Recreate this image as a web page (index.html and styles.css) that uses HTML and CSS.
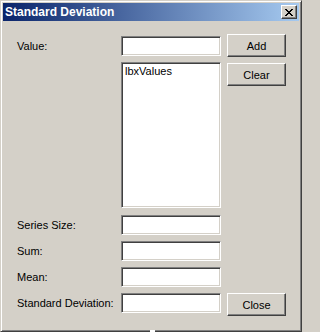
FILE: index.html
```html
<!DOCTYPE html>
<html>
<head>
<meta charset="utf-8">
<title>Standard Deviation</title>
<link rel="stylesheet" href="styles.css">
</head>
<body>
<div class="window">
  <div class="titlebar">
    <span class="title">Standard Deviation</span>
    <button class="tb-close" aria-label="Close">
      <svg width="8" height="7" viewBox="0 0 8 7" shape-rendering="crispEdges">
        <path d="M0 0h2v1h-2zM6 0h2v1h-2zM1 1h2v1h-2zM5 1h2v1h-2zM2 2h4v1h-4zM3 3h2v1h-2zM2 4h4v1h-4zM1 5h2v1h-2zM5 5h2v1h-2zM0 6h2v1h-2zM6 6h2v1h-2z" fill="#000"/>
      </svg>
    </button>
  </div>
  <div class="form">
    <div class="row row-value">
      <span class="lbl lbl-top">Value:</span>
      <div class="field field-top"></div>
      <button class="btn">Add</button>
    </div>
    <div class="row row-list">
      <span class="lbl"></span>
      <div class="listbox">lbxValues</div>
      <button class="btn btn-clear">Clear</button>
    </div>
    <div class="row row-first">
      <span class="lbl">Series Size:</span>
      <div class="field"></div>
    </div>
    <div class="row row-next">
      <span class="lbl">Sum:</span>
      <div class="field"></div>
    </div>
    <div class="row row-next">
      <span class="lbl">Mean:</span>
      <div class="field"></div>
    </div>
    <div class="row row-next">
      <span class="lbl">Standard Deviation:</span>
      <div class="field"></div>
      <button class="btn">Close</button>
    </div>
  </div>
  <span class="notch"></span>
</div>
</body>
</html>
```

FILE: styles.css
```css
html, body {
  margin: 0;
  padding: 0;
  background: #d4d0c8;
}

body {
  font-family: "Liberation Sans", Arial, sans-serif;
  font-size: 11px;
  color: #000;
}

.window {
  position: relative;
  box-sizing: border-box;
  width: 302px;
  height: 332px;
  background: #d4d0c8;
  border: 1px solid;
  border-color: #d4d0c8 #404040 #404040 #d4d0c8;
  box-shadow: inset 1px 1px #ffffff, inset -1px -1px #808080;
  padding: 2px;
}

.titlebar {
  display: flex;
  align-items: center;
  justify-content: space-between;
  height: 18px;
  background: linear-gradient(to right, #0a246a, #a6caf0);
  padding: 0 2px 0 2px;
}

.title {
  color: #fff;
  font-weight: bold;
  font-size: 12px;
  line-height: 18px;
  white-space: nowrap;
}

.tb-close {
  box-sizing: border-box;
  width: 16px;
  height: 14px;
  padding: 0;
  margin: 0;
  display: flex;
  align-items: center;
  justify-content: center;
  background: #d4d0c8;
  border: 1px solid;
  border-color: #ffffff #404040 #404040 #ffffff;
  box-shadow: inset -1px -1px #808080;
}

.tb-close svg {
  display: block;
}

.form {
  padding: 13px 0 0 14px;
}

.row {
  display: flex;
  align-items: flex-start;
}

.row-list { margin-top: 5px; }
.row-first { margin-top: 7px; }
.row-next { margin-top: 6px; }

.lbl {
  width: 104px;
  flex: none;
  line-height: 20px;
  height: 20px;
  white-space: nowrap;
}

.lbl-top { margin-top: 2px; }

.field {
  box-sizing: border-box;
  width: 100px;
  height: 20px;
  flex: none;
  background: #fff;
  border: 1px solid;
  border-color: #808080 #ffffff #ffffff #808080;
  box-shadow: inset 1px 1px #404040, inset -1px -1px #d4d0c8;
}

.field-top { margin-top: 2px; }

.listbox {
  box-sizing: border-box;
  width: 100px;
  height: 146px;
  flex: none;
  background: #fff;
  border: 1px solid;
  border-color: #808080 #ffffff #ffffff #808080;
  box-shadow: inset 1px 1px #404040, inset -1px -1px #d4d0c8;
  padding: 2px 0 0 3px;
  line-height: 13px;
}

.btn {
  box-sizing: border-box;
  width: 59px;
  height: 23px;
  margin: 0 0 0 6px;
  padding: 0;
  flex: none;
  font-family: "Liberation Sans", Arial, sans-serif;
  font-size: 11px;
  color: #000;
  background: #d4d0c8;
  border: 1px solid;
  border-color: #ffffff #404040 #404040 #ffffff;
  box-shadow: inset -1px -1px #808080;
}

.btn-clear { margin-top: 1px; }

.notch {
  position: absolute;
  left: 149px;
  bottom: -1px;
  width: 5px;
  height: 2px;
  background: #fff;
}
```
